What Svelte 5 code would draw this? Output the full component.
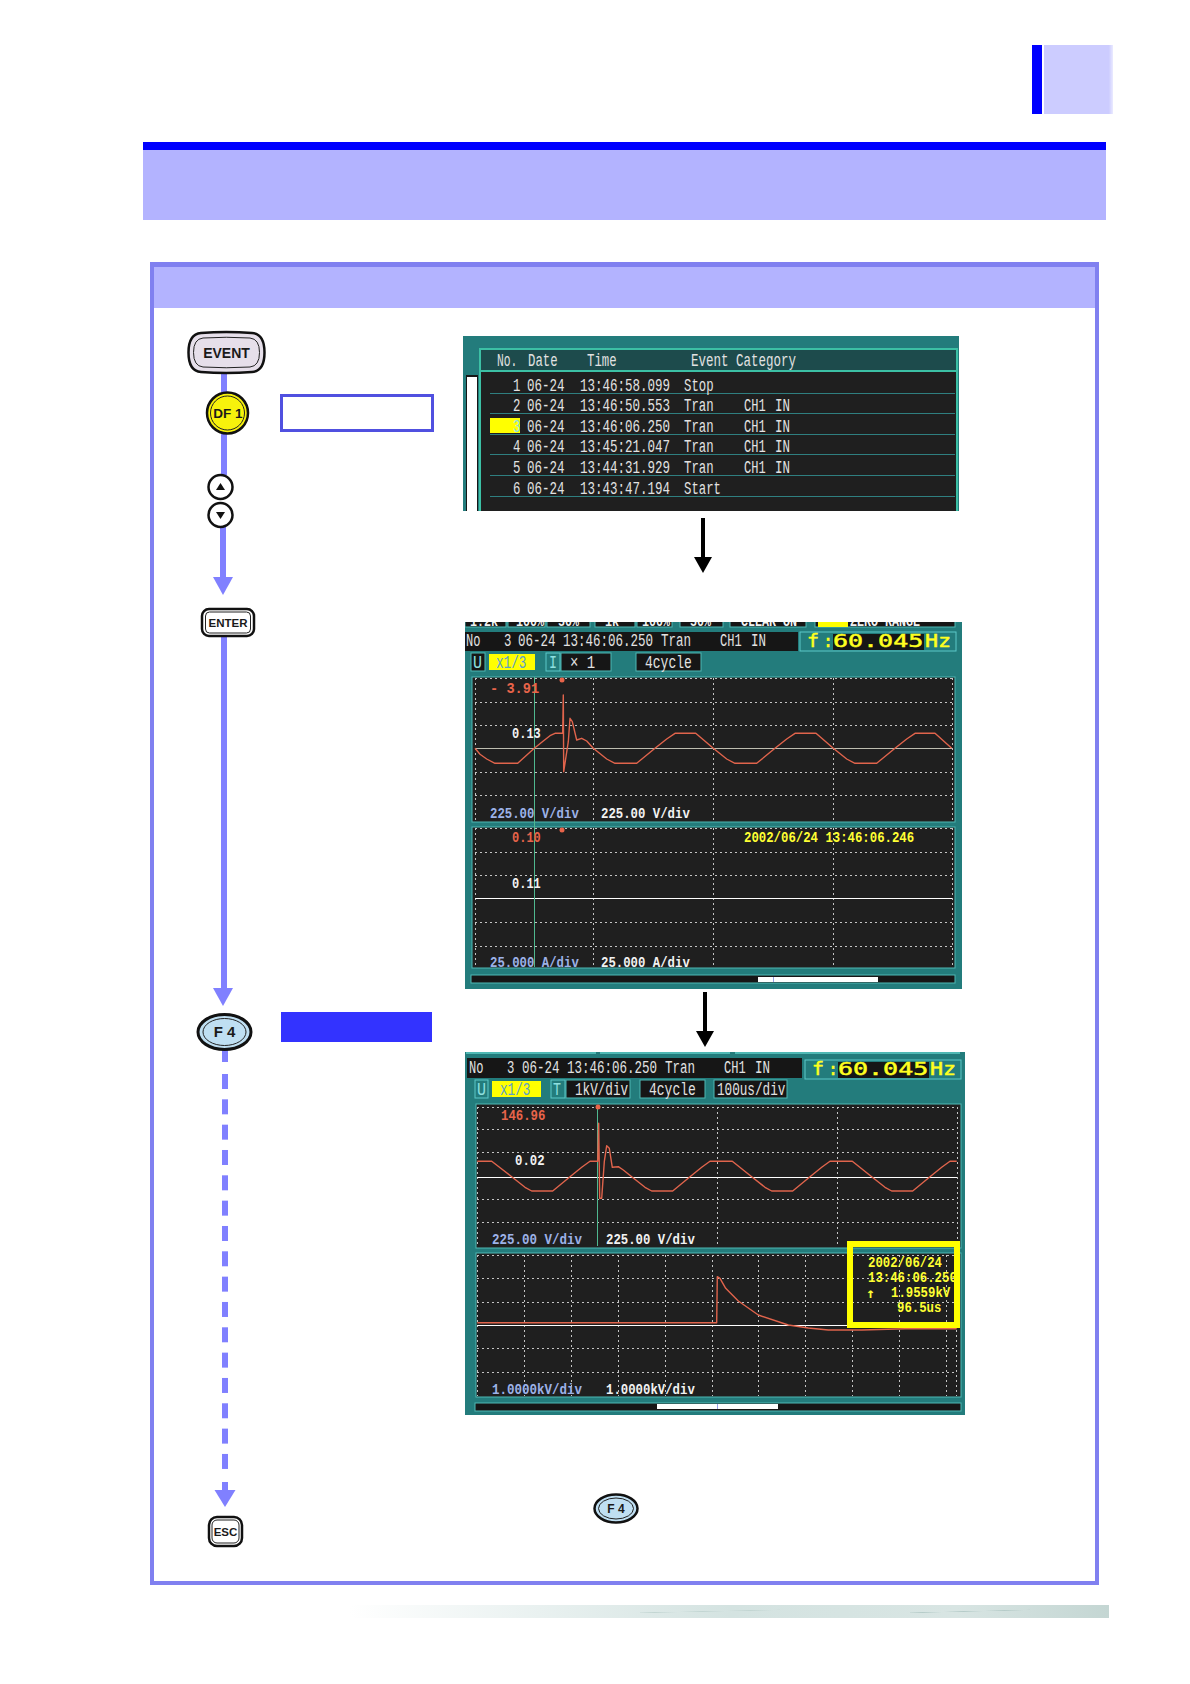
<script>
  const zoomed = (ox, oy, pts) =>
    pts.map(([x, y]) => `${(ox + x / 3).toFixed(1)},${(oy + y / 3).toFixed(1)}`).join(' ');

  const dotted = (xs, ys, x0, x1, y0, y1) => [
    ...xs.map((x) => [x, y0, x, y1, 'dot']),
    ...ys.map((y) => [x0, y, x1, y, 'dot'])
  ];

  const sizeOf = (c) => (c.includes('thin') ? 19 : c.includes('lab') ? 14 : 18);
  const place = (x, y, c, pitch) =>
    `translate(${x} ${y}) scale(${(pitch / (0.6 * sizeOf(c))).toFixed(3)} 1)`;

  const rows = [
    ['1', '06-24', '13:46:58.099', 'Stop', false],
    ['2', '06-24', '13:46:50.553', 'Tran', true],
    ['3', '06-24', '13:46:06.250', 'Tran', true],
    ['4', '06-24', '13:45:21.047', 'Tran', true],
    ['5', '06-24', '13:44:31.929', 'Tran', true],
    ['6', '06-24', '13:43:47.194', 'Start', false]
  ];

  const listTexts = [
    [497, 365.5, 'No.', 'thin', 6.8],
    [528, 365.5, 'Date', 'thin', 7.4],
    [587, 365.5, 'Time', 'thin', 7.4],
    [691, 365.5, 'Event Category', 'thin', 7.5]
  ];
  const listLines = [];
  rows.forEach((r, i) => {
    const y = 390.5 + i * 20.6;
    listTexts.push(
      [513, y, r[0], i === 2 ? 'thin cyan' : 'thin', 7.4],
      [527, y, r[1], 'thin', 7.5],
      [580, y, r[2], 'thin', 7.5],
      [684, y, r[3], 'thin', 7.4]
    );
    if (r[4]) listTexts.push([744, y, 'CH1', 'thin', 7.2], [775, y, 'IN', 'thin', 7.5]);
    listLines.push([490, 393 + i * 20.6, 955, 393 + i * 20.6, 'sep']);
  });

  const listScreen = {
    x: 463, y: 336, w: 496, h: 175, style: 'first',
    rects: [
      [463, 336, 496, 175, 'teal'],
      [480, 349, 477, 170, 'dark edge'],
      [481, 350, 475, 20, 'head'],
      [466, 375, 12, 140, 'black'],
      [467, 377, 10, 140, 'white'],
      [490, 418, 30, 15, 'yellow']
    ],
    lines: [[480, 371, 957, 371, 'edge2'], ...listLines],
    polys: [],
    texts: listTexts
  };

  const freq = (ox, y) => ({
    rects: [
      [ox, y, 156, 19, 'tealbox'],
      [ox + 33, y + 2, 91, 16, 'black']
    ],
    texts: [
      [ox + 7, y + 14.5, 'f', 'freq', 12],
      [ox + 23, y + 14.5, ':', 'freq', 10],
      [ox + 33, y + 15, '60.045', 'freq', 15],
      [ox + 125, y + 14.5, 'Hz', 'freq', 13]
    ]
  });

  const f2 = freq(800, 632);
  const wave1 = zoomed(455, 615, [
    [60, 400], [75, 418], [95, 432], [120, 445], [188, 445], [238, 400], [265, 378], [285, 362], [300, 355], [323, 355], [325, 240],
    [326, 470], [340, 380], [345, 310], [352, 320], [365, 375], [380, 370], [395, 378], [415, 400], [455, 432], [480, 445],
    [545, 445], [600, 400], [635, 372], [660, 355], [722, 355], [775, 400], [815, 432], [840, 445], [905, 445], [960, 400], [995, 372], [1020, 355],
    [1083, 355], [1135, 400], [1175, 432], [1200, 445], [1265, 445], [1320, 400], [1355, 372], [1380, 355], [1440, 355], [1490, 400]
  ]);

  const timeScreen = {
    x: 465, y: 622, w: 497, h: 367, style: 'second',
    rects: [
      [465, 622, 497, 367, 'teal'],
      [465, 620, 41, 7, 'black lit'], [508, 620, 37, 7, 'black lit'], [547, 620, 43, 7, 'black lit'],
      [595, 620, 40, 7, 'black lit'], [637, 620, 35, 7, 'black lit'], [680, 620, 43, 7, 'black lit'],
      [730, 620, 76, 7, 'black lit'], [815, 620, 140, 7, 'black lit'], [818, 622, 30, 5, 'yellow'],
      [465, 632, 333, 19, 'black'],
      ...f2.rects,
      [471, 653, 14, 18, 'black lit'], [489, 654, 46, 16, 'yellow'],
      [546, 653, 14, 18, 'tealbox'], [561, 653, 50, 18, 'black lit'], [636, 653, 65, 18, 'black lit'],
      [472, 677, 483, 145, 'dark lit'],
      [472, 827, 483, 141, 'dark lit'],
      [471, 975, 484, 8, 'black lit'],
      [758, 977, 120, 5, 'white']
    ],
    lines: [
      ...dotted([475.5, 593.5, 713.5, 833.5, 952.5], [678.5, 702.5, 725.5, 772.5, 795.5], 475, 952, 678, 821),
      ...dotted([475.5, 593.5, 713.5, 833.5, 952.5], [828.5, 852.5, 875.5, 922.5, 946.5], 475, 952, 828, 967),
      [475, 748.5, 952, 748.5, 'zero'],
      [475, 898.5, 952, 898.5, 'zero bright'],
      [534.5, 677, 534.5, 967, 'cursor'],
      [773.5, 977, 773.5, 982, 'tick']
    ],
    polys: [[wave1, 'wave']],
    marks: [[562, 680], [562, 830]],
    texts: [
      [470, 625.5, '1:2k', 'lab', 7], [516, 625.5, '100%', 'lab', 7], [558, 625.5, '50%', 'lab', 7],
      [605, 625.5, '1k', 'lab', 7], [642, 625.5, '100%', 'lab', 7], [690, 625.5, '50%', 'lab', 7],
      [741, 625.5, 'CLEAR ON', 'lab', 7], [850, 625.5, 'ZERO RANGE', 'lab', 7],
      [466, 646, 'No', 'thin', 7.2], [504, 646, '3', 'thin', 7.4], [518, 646, '06-24', 'thin', 7.5],
      [563, 646, '13:46:06.250', 'thin', 7.5], [661, 646, 'Tran', 'thin', 7.5], [720, 646, 'CH1', 'thin', 7.2],
      [751, 646, 'IN', 'thin', 7.5],
      ...f2.texts,
      [473, 668, 'U', 'thin cyan', 9], [496, 668, 'x1/3', 'thin onyellow', 7.6],
      [549, 668, 'I', 'thin cyan', 8], [570, 668, '× 1', 'thin', 8.4], [645, 668, '4cycle', 'thin', 7.8],
      [490, 693, '- 3.91', 'lab red', 8.2], [512, 738, '0.13', 'lab', 7.2],
      [490, 818, '225.00 V/div', 'lab blue', 7.4], [601, 818, '225.00 V/div', 'lab', 7.4],
      [512, 842, '0.10', 'lab red', 7.2], [512, 888, '0.11', 'lab', 7.2],
      [744, 842, '2002/06/24 13:46:06.246', 'lab gold', 7.4],
      [490, 967, '25.000 A/div', 'lab blue', 7.4], [601, 967, '25.000 A/div', 'lab', 7.4]
    ]
  };

  const f3 = freq(805, 1060);
  const wave3a = zoomed(455, 1045, [
    [67, 349], [110, 349], [170, 395], [210, 427], [230, 438], [293, 438], [345, 395], [380, 367], [405, 349], [428, 349], [431, 235],
    [434, 460], [440, 460], [448, 350], [455, 302], [463, 310], [472, 367], [490, 365], [505, 375], [530, 395],
    [570, 427], [590, 438], [653, 438], [705, 395], [740, 367], [765, 349], [832, 349], [890, 395], [930, 427], [950, 438], [1013, 438], [1065, 395],
    [1100, 367], [1125, 349], [1192, 349], [1250, 395], [1290, 427], [1310, 438], [1373, 438], [1425, 395], [1460, 367], [1485, 349], [1505, 349]
  ]);
  const wave3b = zoomed(455, 1230, [
    [67, 278], [785, 278], [787, 140], [795, 145], [812, 175], [850, 213], [910, 255], [1000, 285], [1060, 294],
    [1120, 300], [1220, 300], [1350, 296], [1505, 296]
  ]);
  const lowerX = [67, 208, 350, 490, 631, 772, 911, 1051, 1192, 1333, 1474, 1505].map(
    (v) => Math.floor(455 + v / 3) + 0.5
  );

  const transientScreen = {
    x: 465, y: 1052, w: 500, h: 363, style: 'third',
    rects: [
      [465, 1052, 500, 363, 'teal'],
      [466, 1052, 130, 2, 'lit2'], [600, 1052, 130, 2, 'lit2'], [735, 1052, 225, 2, 'lit2'],
      [467, 1058, 335, 20, 'black'],
      ...f3.rects,
      [475, 1080, 13, 18, 'tealbox'], [492, 1081, 49, 16, 'yellow'],
      [551, 1080, 14, 18, 'tealbox'], [566, 1080, 64, 18, 'black lit'], [640, 1080, 65, 18, 'black lit'],
      [714, 1080, 73, 18, 'black lit'],
      [476, 1104, 485, 144, 'dark lit'],
      [476, 1253, 485, 144, 'dark lit'],
      [475, 1403, 486, 8, 'black lit'],
      [657, 1404, 121, 5, 'white']
    ],
    lines: [
      ...dotted([477.5, 717.5, 837.5, 957.5], [1107.5, 1129.5, 1152.5, 1199.5, 1222.5], 477, 957, 1107, 1247),
      ...dotted(lowerX, [1255.5, 1278.5, 1302.5, 1348.5, 1372.5], 477, 957, 1255, 1396),
      [477, 1177.5, 957, 1177.5, 'zero bright'],
      [477, 1325.5, 957, 1325.5, 'zero bright'],
      [597.5, 1105, 597.5, 1246, 'cursor'],
      [717.5, 1404, 717.5, 1409, 'tick']
    ],
    polys: [[wave3a, 'wave'], [wave3b, 'wave']],
    marks: [[598, 1107]],
    box: [850, 1244, 107, 81],
    texts: [
      [469, 1073, 'No', 'thin', 7.2], [507, 1073, '3', 'thin', 7.4], [522, 1073, '06-24', 'thin', 7.5],
      [567, 1073, '13:46:06.250', 'thin', 7.5], [665, 1073, 'Tran', 'thin', 7.5], [724, 1073, 'CH1', 'thin', 7.2],
      [755, 1073, 'IN', 'thin', 7.5],
      ...f3.texts,
      [477, 1095, 'U', 'thin cyan', 9], [500, 1095, 'x1/3', 'thin onyellow', 7.6],
      [553, 1095, 'T', 'thin cyan', 8], [575, 1095, '1kV/div', 'thin', 7.6], [649, 1095, '4cycle', 'thin', 7.8],
      [717, 1095, '100us/div', 'thin', 7.6],
      [501, 1120, '146.96', 'lab red', 7.4], [515, 1165, '0.02', 'lab', 7.4],
      [492, 1244, '225.00 V/div', 'lab blue', 7.5], [606, 1244, '225.00 V/div', 'lab', 7.4],
      [492, 1394, '1.0000kV/div', 'lab blue', 7.5], [606, 1394, '1.0000kV/div', 'lab', 7.4],
      [868, 1267, '2002/06/24', 'lab gold', 7.4], [868, 1282, '13:46:06.250', 'lab gold', 7.4],
      [866, 1298, '↑', 'lab gold up', 9], [891, 1297, '1.9559kV', 'lab gold', 7.4],
      [897, 1312, '96.5us', 'lab gold', 7.4]
    ]
  };

  const screens = [listScreen, timeScreen, transientScreen];
</script>

<div class="page">
  <div class="tab">
    <div class="tab-bar"></div>
    <div class="tab-fill"></div>
  </div>

  <header class="title"></header>

  <section class="panel">
    <div class="band"></div>
    <div class="body">
      <svg class="flow" viewBox="154 308 301 1273" width="301" height="1273">
        <rect class="track" x="221" y="373" width="6" height="20" />
        <rect class="track" x="221" y="433" width="6" height="42" />
        <rect class="track" x="220" y="527" width="6" height="52" />
        <polygon class="track" points="213,577 233,577 223,595" />
        <rect class="track" x="221" y="637" width="6" height="352" />
        <polygon class="track" points="213,988 233,988 223,1006" />
        <rect class="track" x="222" y="1050" width="6" height="12" />
        {#each Array(16) as _, i}
          <rect class="track" x="222" y={1074 + i * 25.33} width="6" height="15" />
        {/each}
        <rect class="track" x="222" y="1482" width="6" height="9" />
        <polygon class="track" points="214.500,1490 235.500,1490 225,1507" />

        <path class="key-event" d="M201,333 Q226,331 252,333 Q264.500,334 264.500,352.500 Q264.500,371 252,372 Q226,374 201,372 Q188.500,371 188.500,352.500 Q188.500,334 201,333 Z" />
        <path class="key-line" d="M203,338 Q226,336.500 250,338 Q259.500,339 259.500,352.500 Q259.500,366 250,367 Q226,368.500 203,367 Q193.500,366 193.500,352.500 Q193.500,339 203,338 Z" />
        <text class="key-text" x="226.500" y="358" font-size="14">EVENT</text>

        <circle class="key-yellow" cx="227.500" cy="413" r="20.500" />
        <circle class="key-line" cx="227.500" cy="413" r="17" />
        <text class="key-text" x="228" y="418" font-size="13.500">DF 1</text>

        <circle class="key-round" cx="220.500" cy="487" r="12" />
        <polygon class="key-mark" points="220.500,483 225,490 216,490" />
        <circle class="key-round" cx="220.500" cy="515" r="12" />
        <polygon class="key-mark" points="220.500,519 225,512 216,512" />

        <rect class="key-plain" x="202" y="609" width="52" height="27" rx="7" />
        <rect class="key-line" x="205.500" y="612" width="45" height="21" rx="4" />
        <text class="key-text" x="228" y="627" font-size="11.500">ENTER</text>

        <ellipse class="key-blue" cx="224.500" cy="1032" rx="26.500" ry="17.500" />
        <ellipse class="key-line" cx="224.500" cy="1032" rx="21.500" ry="13.500" />
        <text class="key-text" x="224.500" y="1037" font-size="15">F 4</text>

        <rect class="key-plain" x="209" y="1517" width="33" height="29" rx="8" />
        <rect class="key-line" x="212" y="1520" width="27" height="23" rx="5" />
        <text class="key-text" x="225.500" y="1536" font-size="11.500">ESC</text>

        <rect class="label-outline" x="281.500" y="395.500" width="151" height="35" />
        <rect class="label-solid" x="281" y="1012" width="151" height="30" />
      </svg>

      <div class="screens">
        {#each screens as s, n}
          <svg class="screen {s.style}" viewBox="{s.x} {s.y} {s.w} {s.h}" width={s.w} height={s.h}>
            {#each s.rects as [x, y, w, h, c]}
              <rect {x} {y} width={w} height={h} class={c} />
            {/each}
            {#each s.lines as [x1, y1, x2, y2, c]}
              <line {x1} {y1} {x2} {y2} class={c} />
            {/each}
            {#each s.polys as [points, c]}
              <polyline {points} class={c} />
            {/each}
            {#each s.marks ?? [] as [x, y]}
              <circle cx={x} cy={y} r="2.500" class="mark" />
            {/each}
            {#each s.texts as [x, y, str, c, pitch]}
              <text class={c} transform={place(x, y, c, pitch)}>{str}</text>
            {/each}
            {#if s.box}
              <rect x={s.box[0]} y={s.box[1]} width={s.box[2]} height={s.box[3]} class="callout" />
            {/if}
          </svg>
          {#if n < 2}
            <svg class="arrow a{n}" viewBox="0 0 18 56" width="18" height="56">
              <rect class="arrow-ink" x="7" y="0" width="4" height="40" />
              <polygon class="arrow-ink" points="0,39 18,39 9,55" />
            </svg>
          {/if}
        {/each}

        <svg class="note-key" viewBox="0 0 46 31" width="46" height="31">
          <ellipse class="key-blue thin-key" cx="23" cy="15.500" rx="21.500" ry="14" />
          <ellipse class="key-line" cx="23" cy="15.500" rx="17.500" ry="10.500" />
          <text class="key-text" x="23" y="20" font-size="12">F 4</text>
        </svg>
      </div>
    </div>
  </section>

  <div class="strip"></div>
</div>

<style>
  :global(body) {
    margin: 0;
    background: #fff;
  }
  .page {
    height: 1684px;
    padding-top: 45px;
    box-sizing: border-box;
    overflow: hidden;
  }
  .tab {
    display: flex;
    gap: 2px;
    height: 69px;
    margin-left: 1032px;
  }
  .tab-bar {
    width: 10px;
    background: #0000ff;
  }
  .tab-fill {
    width: 69px;
    background: linear-gradient(90deg, #ccccff 0%, #ccccff 94%, #ebebff 100%);
  }
  .title {
    width: 963px;
    height: 70px;
    margin: 28px 0 0 143px;
    border-top: 8px solid #0000ff;
    background: #b3b3ff;
  }
  .panel {
    width: 941px;
    height: 1314px;
    margin: 42px 0 0 150px;
    border: 4px solid #8080f0;
    border-top-width: 5px;
  }
  .band {
    height: 41px;
    background: #b3b3ff;
  }
  .body {
    display: flex;
    align-items: flex-start;
  }
  .flow {
    flex: none;
    display: block;
    margin-right: 8px;
  }
  .screens {
    display: flex;
    flex-direction: column;
    align-items: flex-start;
    padding-top: 28px;
  }
  .screen {
    display: block;
    overflow: hidden;
  }
  .second,
  .third {
    margin-left: 2px;
  }
  .arrow {
    display: block;
  }
  .a0 {
    margin: 7px 0 48px 231px;
  }
  .a1 {
    margin: 3px 0 4px 233px;
  }
  .note-key {
    display: block;
    margin: 78px 0 0 130px;
  }

  .track {
    fill: #8080ff;
  }
  .key-event,
  .key-yellow,
  .key-round,
  .key-plain,
  .key-blue {
    stroke: #111;
    stroke-width: 2.500;
  }
  .key-event {
    fill: #e6dfea;
  }
  .key-yellow {
    fill: #f7f20c;
  }
  .key-round,
  .key-plain {
    fill: #fff;
  }
  .key-blue {
    fill: #bfdff2;
    stroke-width: 3;
  }
  .thin-key {
    stroke-width: 2.500;
  }
  .key-line {
    fill: none;
    stroke: #222;
    stroke-width: 1;
  }
  .key-mark {
    fill: #111;
  }
  .key-text {
    font-family: 'Liberation Sans', sans-serif;
    font-weight: 700;
    fill: #1a1a1a;
    text-anchor: middle;
  }
  .label-outline {
    fill: #fff;
    stroke: #5050e0;
    stroke-width: 3;
  }
  .label-solid {
    fill: #3333ff;
  }
  .arrow-ink {
    fill: #000;
  }

  .strip {
    width: 759px;
    height: 13px;
    margin: 20px 0 0 350px;
    background:
      linear-gradient(178.600deg, transparent 46%, #b5cbc8 49%, transparent 52%) 560px 0 / 120px 13px no-repeat,
      linear-gradient(178.800deg, transparent 46%, #c2d5d2 49%, transparent 52%) 290px 0 / 140px 13px no-repeat,
      linear-gradient(90deg, #fff 0%, #e9f1f0 25%, #d4e3e1 50%, #d8e5e3 80%, #c4d6d3 100%);
  }

  .teal {
    fill: #237c7c;
  }
  .dark {
    fill: #1f1f1f;
  }
  .black {
    fill: #161616;
  }
  .head {
    fill: #1d4b4c;
  }
  .white {
    fill: #fff;
  }
  .yellow {
    fill: #ffff00;
  }
  .edge {
    stroke: #3cc0a5;
    stroke-width: 2;
  }
  .lit {
    stroke: #4fb8b4;
    stroke-width: 1;
  }
  .lit2 {
    fill: #4fb8b4;
  }
  .tealbox {
    fill: #237c7c;
    stroke: #5cc8c8;
    stroke-width: 1;
  }
  .edge2 {
    stroke: #3cc0a5;
    stroke-width: 2;
  }
  .sep {
    stroke: #2f7f80;
    stroke-width: 1;
    shape-rendering: crispEdges;
  }
  .dot {
    stroke: #c4c4c4;
    stroke-width: 1;
    stroke-dasharray: 2 3;
    shape-rendering: crispEdges;
  }
  .zero {
    stroke: #bdbdb0;
    stroke-width: 1;
    shape-rendering: crispEdges;
  }
  .bright {
    stroke: #fff;
  }
  .cursor {
    stroke: #4fb88f;
    stroke-width: 1;
    shape-rendering: crispEdges;
  }
  .tick {
    stroke: #9aa0e8;
    stroke-width: 1;
  }
  .wave {
    fill: none;
    stroke: #e0644c;
    stroke-width: 1.400;
    stroke-linejoin: round;
  }
  .mark {
    fill: #e8644a;
  }
  .callout {
    fill: none;
    stroke: #ffff00;
    stroke-width: 6;
  }
  .thin {
    font-family: 'Liberation Mono', monospace;
    font-size: 19px;
    fill: #e2e2e2;
  }
  .cyan {
    fill: #8fe0e0;
  }
  .onyellow {
    fill: #5aa0c8;
  }
  .lab {
    font-family: 'Liberation Mono', monospace;
    font-weight: 700;
    font-size: 14px;
    fill: #f2f2f2;
  }
  .red {
    fill: #e8644a;
  }
  .blue {
    fill: #9db2e8;
  }
  .gold {
    fill: #ffff33;
  }
  .up {
    font-family: 'DejaVu Sans Mono', monospace;
  }
  .freq {
    font-family: 'DejaVu Sans Mono', monospace;
    font-weight: 400;
    font-size: 18px;
    fill: #ffff20;
    stroke: #ffff20;
    stroke-width: 0.500;
  }
</style>
